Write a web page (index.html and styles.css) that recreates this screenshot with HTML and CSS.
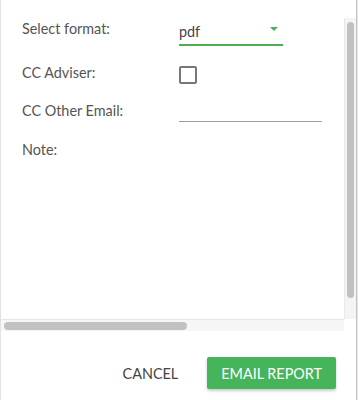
FILE: index.html
```html
<!DOCTYPE html>
<html lang="en">
  <head>
    <meta charset="utf-8">
    <title>Email report</title>
    <link rel="stylesheet" href="styles.css">
  </head>
  <body>
    <div class="dialog">
      <div class="scroll-area">
        <div class="content">
          <div class="form">
            <label class="label">Select format:</label>
            <div class="select">
              <span>pdf</span>
              <span class="caret"></span>
            </div>

            <label class="label">CC Adviser:</label>
            <div><span class="checkbox"></span></div>

            <label class="label">CC Other Email:</label>
            <div class="text-input"></div>

            <label class="label">Note:</label>
            <div></div>
          </div>
        </div>
        <div class="vbar"><div class="vthumb"></div></div>
        <div class="hbar"><div class="hthumb"></div></div>
        <div class="corner"></div>
      </div>

      <div class="actions">
        <button class="btn btn-flat">Cancel</button>
        <button class="btn btn-green">Email Report</button>
      </div>
    </div>
  </body>
</html>
```

FILE: styles.css
```css
* {
  box-sizing: border-box;
  margin: 0;
  padding: 0;
}

body {
  width: 358px;
  height: 400px;
  background: #e4e4e4;
  font-family: "Lato", "Open Sans", sans-serif;
  font-size: 14.4px;
  color: #555;
  overflow: hidden;
}

.dialog {
  width: 357px;
  height: 400px;
  background: #fff;
  border-left: 1px solid #e2e2e2;
  border-right: 1px solid #c4c4c4;
  display: flex;
  flex-direction: column;
}

.scroll-area {
  display: grid;
  grid-template-columns: 343px 12px;
  grid-template-rows: 319px 12px;
  height: 331px;
}

.content {
  padding: 19px 0 0 21px;
  overflow: hidden;
}

.form {
  display: grid;
  grid-template-columns: 157px 143px;
  grid-template-rows: 44px 38px 39px auto;
  align-items: start;
  line-height: 20px;
}

.select {
  margin-top: 1px;
  width: 104px;
  padding: 2px 0 2px 0;
  border-bottom: 2px solid #4caf50;
  display: flex;
  justify-content: space-between;
  align-items: center;
  color: #444;
}

.caret {
  width: 0;
  height: 0;
  margin: -6px 5px 0 0;
  border-left: 4px solid transparent;
  border-right: 4px solid transparent;
  border-top: 4px solid #4caf50;
}

.checkbox {
  display: block;
  margin-top: 3px;
  width: 18px;
  height: 18px;
  border: 2px solid #777;
  border-radius: 2px;
}

.text-input {
  height: 21px;
  border-bottom: 1px solid #9e9e9e;
}

.vbar {
  margin-top: 18px;
  background: #f4f4f4;
  border-left: 1px solid #e8e8e8;
  padding: 4px 2px 0 2px;
}

.vthumb {
  height: 276px;
  background: #c1c1c1;
  border-radius: 4px;
}

.hbar {
  background: #f6f6f6;
  border-top: 1px solid #e6e6e6;
  padding: 2px 0 0 3px;
}

.hthumb {
  width: 183px;
  height: 8px;
  background: #c1c1c1;
  border-radius: 4px;
}

.corner {
  background: #fff;
}

.actions {
  display: flex;
  justify-content: flex-end;
  align-items: center;
  gap: 15px;
  padding: 26px 20px 0 0;
}

.btn {
  font-family: inherit;
  font-size: 14.4px;
  text-transform: uppercase;
  height: 32px;
  padding: 0 14px;
  border: 0;
  border-radius: 2px;
  background: transparent;
  cursor: pointer;
}

.btn-flat {
  color: #444;
}

.btn-green {
  background: #46b45a;
  color: #fff;
  box-shadow: 0 2px 3px rgba(0, 0, 0, 0.2);
}
```
